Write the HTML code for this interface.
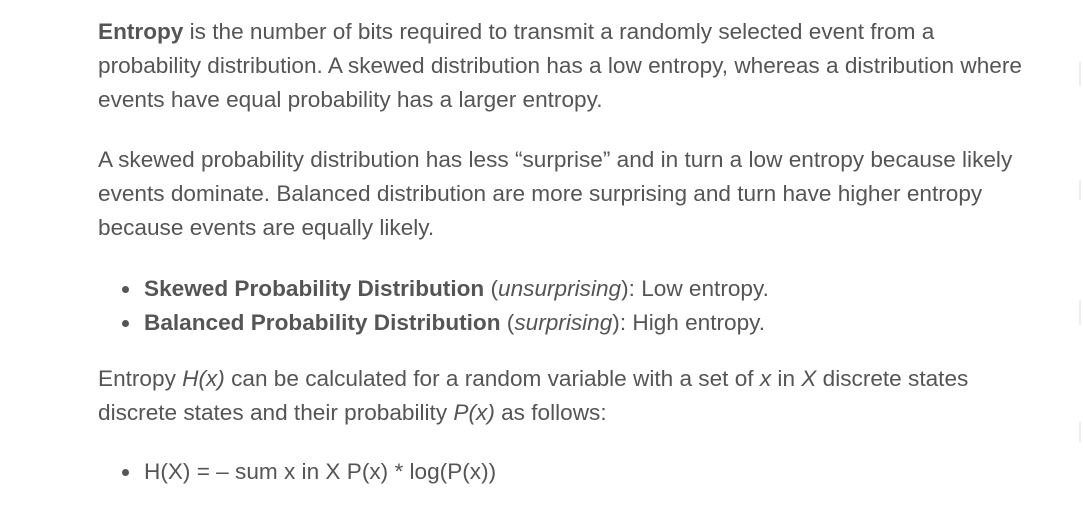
<!DOCTYPE html>
<html><head><meta charset="utf-8"><style>
html,body{margin:0;padding:0;background:#fff;width:1083px;height:511px;overflow:hidden;position:relative}
.b{position:absolute;left:98px;font-family:"Liberation Sans",Arial,sans-serif;font-size:22.6px;line-height:34px;color:#555;margin:0;white-space:nowrap}
b{color:#555}
ul.b{left:98px;padding:0;list-style:none}
ul.b li{position:relative;padding-left:46px}
ul.b li:before{content:"";position:absolute;left:24px;top:14px;width:7px;height:7px;border-radius:50%;background:#555}
.m{position:absolute;left:1079px;width:2px;background:#eee}
</style></head><body>
<p class="b" style="top:15px"><b>Entropy</b> is the number of bits required to transmit a randomly selected event from a<br>probability distribution. A skewed distribution has a low entropy, whereas a distribution where<br>events have equal probability has a larger entropy.</p>
<p class="b" style="top:143px">A skewed probability distribution has less “surprise” and in turn a low entropy because likely<br>events dominate. Balanced distribution are more surprising and turn have higher entropy<br>because events are equally likely.</p>
<ul class="b" style="top:272px;margin:0">
<li><b>Skewed Probability Distribution</b> (<i>unsurprising</i>): Low entropy.</li>
<li><b>Balanced Probability Distribution</b> (<i>surprising</i>): High entropy.</li>
</ul>
<p class="b" style="top:362px">Entropy <i>H(x)</i> can be calculated for a random variable with a set of <i>x</i> in <i>X</i> discrete states<br>discrete states and their probability <i>P(x)</i> as follows:</p>
<ul class="b" style="top:455px;margin:0">
<li>H(X) = – sum x in X P(x) * log(P(x))</li>
</ul>
<div class="m" style="top:62px;height:24px"></div>
<div class="m" style="top:180px;height:20px"></div>
<div class="m" style="top:300px;height:25px"></div>
<div class="m" style="top:422px;height:20px"></div>
</body></html>
